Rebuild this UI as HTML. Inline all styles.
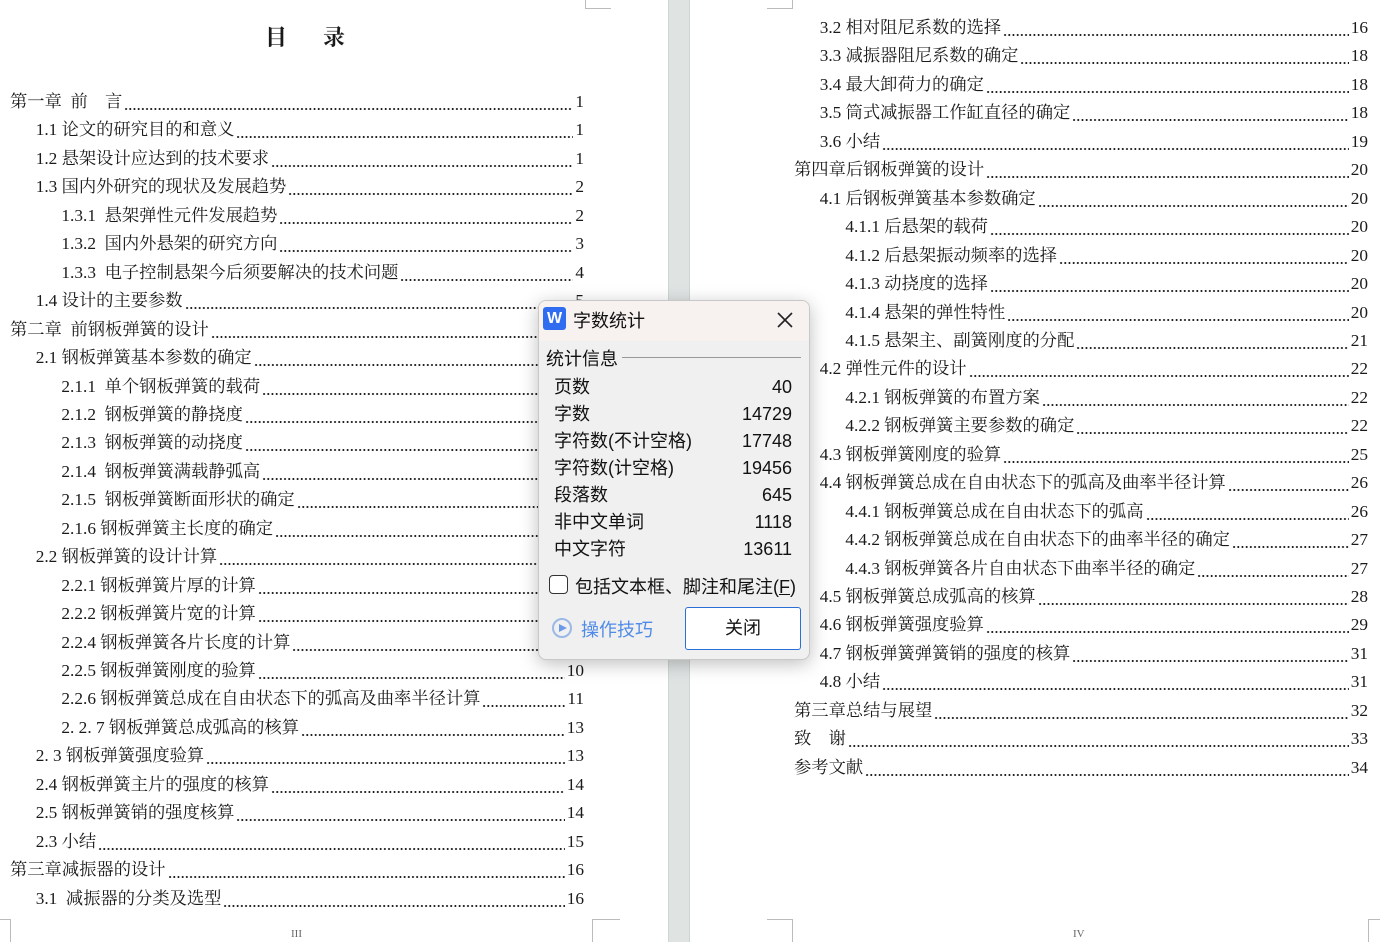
<!DOCTYPE html>
<html><head><meta charset="utf-8"><style>
*{margin:0;padding:0;box-sizing:border-box}
body{width:1380px;height:942px;position:relative;background:#fff;overflow:hidden;font-family:"Liberation Serif","Noto Serif CJK SC",serif;color:#1a1a1a}
.gap{position:absolute;left:668px;top:0;width:22px;height:942px;background:#dfe4e3;border-left:1px solid #cfd5d4;border-right:1px solid #cfd5d4}
.r{position:absolute;height:22px;display:flex;align-items:flex-end;font-size:17.3px;line-height:22px;white-space:nowrap}
.r .l{flex:1;height:22px;margin:0 2px;background-image:radial-gradient(circle,#222 0.9px,transparent 1.1px);background-size:4.2px 4px;background-repeat:repeat-x;background-position:0 16px}
.m{position:absolute;border-color:#bbb;border-style:solid;border-width:0}
.title{position:absolute;left:265px;top:21px;font-size:22px;font-weight:bold;letter-spacing:36px;font-family:"Noto Serif CJK SC",serif}
.pn{position:absolute;font-size:11px;color:#666}
.dlg{position:absolute;left:538px;top:300px;width:272px;height:360px;background:#f0f0f0;border:1px solid #c8c8c8;border-radius:8px;box-shadow:0 4px 18px rgba(0,0,0,.25);font-family:"Liberation Sans","Noto Sans CJK SC",sans-serif;color:#111;overflow:hidden}
.tb{height:40px;background:#f7f1ef;position:relative}
.dr{position:absolute;left:15px;right:17px;display:flex;justify-content:space-between;font-size:18px;line-height:24px}
</style></head><body>
<div class="gap"></div>
<div class="m" style="left:585px;top:0;width:26px;height:9px;border-left-width:1px;border-bottom-width:1px"></div>
<div class="m" style="left:767px;top:0;width:26px;height:9px;border-right-width:1px;border-bottom-width:1px"></div>
<div class="m" style="left:0;top:919px;width:11px;height:23px;border-right-width:1px;border-top-width:1px"></div>
<div class="m" style="left:592px;top:919px;width:28px;height:23px;border-left-width:1px;border-top-width:1px"></div>
<div class="m" style="left:767px;top:919px;width:26px;height:23px;border-right-width:1px;border-top-width:1px"></div>
<div class="m" style="left:1368px;top:919px;width:12px;height:23px;border-left-width:1px;border-top-width:1px"></div>
<div class="title">目录</div>
<div class="pn" style="left:291px;top:928px">III</div>
<div class="pn" style="left:1073px;top:928px">IV</div>
<div id="L"></div>
<div class="dlg">
 <div class="tb">
  <div style="position:absolute;left:4px;top:6px;width:23px;height:23px;background:#2f6cf0;border-radius:3px;color:#fff;font-weight:bold;font-size:16px;text-align:center;line-height:23px">W</div>
  <div style="position:absolute;left:34px;top:6px;font-size:18px">字数统计</div>
  <svg style="position:absolute;left:237px;top:10px" width="18" height="18"><path d="M2 2L16 16M16 2L2 16" stroke="#222" stroke-width="1.6"/></svg>
 </div>
 <div style="position:absolute;left:7px;top:44px;font-size:18px">统计信息</div>
 <div style="position:absolute;left:83px;right:8px;top:56px;border-top:1px solid #999"></div>
 <div class="dr" style="top:74px"><span>页数</span><span>40</span></div>
 <div class="dr" style="top:101px"><span>字数</span><span>14729</span></div>
 <div class="dr" style="top:128px"><span>字符数(不计空格)</span><span>17748</span></div>
 <div class="dr" style="top:155px"><span>字符数(计空格)</span><span>19456</span></div>
 <div class="dr" style="top:182px"><span>段落数</span><span>645</span></div>
 <div class="dr" style="top:209px"><span>非中文单词</span><span>1118</span></div>
 <div class="dr" style="top:236px"><span>中文字符</span><span>13611</span></div>
 <div style="position:absolute;left:10px;top:274px;width:19px;height:19px;border:1px solid #333;border-radius:4px;background:#fff"></div>
 <div style="position:absolute;left:36px;top:272px;font-size:18px">包括文本框、脚注和尾注(<u>F</u>)</div>
 <div style="position:absolute;left:13px;top:317px;width:20px;height:20px;border:2px solid #9bb8e6;border-radius:50%"></div>
 <svg style="position:absolute;left:19px;top:322px" width="10" height="10"><path d="M1 1L9 5L1 9Z" fill="#6b9be8"/></svg>
 <div style="position:absolute;left:42px;top:315px;font-size:18px;color:#4f8ae8">操作技巧</div>
 <div style="position:absolute;left:146px;top:306px;width:116px;height:43px;border:1px solid #2a6fd6;border-radius:3px;background:#fff;text-align:center;line-height:41px;font-size:18px">关闭</div>
</div>
<script>
const L=[[0,"第一章  前    言","1"],[1,"1.1 论文的研究目的和意义","1"],[1,"1.2 悬架设计应达到的技术要求","1"],[1,"1.3 国内外研究的现状及发展趋势","2"],[2,"1.3.1  悬架弹性元件发展趋势","2"],[2,"1.3.2  国内外悬架的研究方向","3"],[2,"1.3.3  电子控制悬架今后须要解决的技术问题","4"],[1,"1.4 设计的主要参数","5"],[0,"第二章  前钢板弹簧的设计","5"],[1,"2.1 钢板弹簧基本参数的确定","5"],[2,"2.1.1  单个钢板弹簧的载荷","5"],[2,"2.1.2  钢板弹簧的静挠度","6"],[2,"2.1.3  钢板弹簧的动挠度","6"],[2,"2.1.4  钢板弹簧满载静弧高","6"],[2,"2.1.5  钢板弹簧断面形状的确定","7"],[2,"2.1.6 钢板弹簧主长度的确定","7"],[1,"2.2 钢板弹簧的设计计算","8"],[2,"2.2.1 钢板弹簧片厚的计算","8"],[2,"2.2.2 钢板弹簧片宽的计算","8"],[2,"2.2.4 钢板弹簧各片长度的计算","9"],[2,"2.2.5 钢板弹簧刚度的验算","10"],[2,"2.2.6 钢板弹簧总成在自由状态下的弧高及曲率半径计算","11"],[2,"2. 2. 7 钢板弹簧总成弧高的核算","13"],[1,"2. 3 钢板弹簧强度验算","13"],[1,"2.4 钢板弹簧主片的强度的核算","14"],[1,"2.5 钢板弹簧销的强度核算","14"],[1,"2.3 小结","15"],[0,"第三章减振器的设计","16"],[1,"3.1  减振器的分类及选型","16"]];
const R=[[1,"3.2 相对阻尼系数的选择","16"],[1,"3.3 减振器阻尼系数的确定","18"],[1,"3.4 最大卸荷力的确定","18"],[1,"3.5 筒式减振器工作缸直径的确定","18"],[1,"3.6 小结","19"],[0,"第四章后钢板弹簧的设计","20"],[1,"4.1 后钢板弹簧基本参数确定","20"],[2,"4.1.1 后悬架的载荷","20"],[2,"4.1.2 后悬架振动频率的选择","20"],[2,"4.1.3 动挠度的选择","20"],[2,"4.1.4 悬架的弹性特性","20"],[2,"4.1.5 悬架主、副簧刚度的分配","21"],[1,"4.2 弹性元件的设计","22"],[2,"4.2.1 钢板弹簧的布置方案","22"],[2,"4.2.2 钢板弹簧主要参数的确定","22"],[1,"4.3 钢板弹簧刚度的验算","25"],[1,"4.4 钢板弹簧总成在自由状态下的弧高及曲率半径计算","26"],[2,"4.4.1 钢板弹簧总成在自由状态下的弧高","26"],[2,"4.4.2 钢板弹簧总成在自由状态下的曲率半径的确定","27"],[2,"4.4.3 钢板弹簧各片自由状态下曲率半径的确定","27"],[1,"4.5 钢板弹簧总成弧高的核算","28"],[1,"4.6 钢板弹簧强度验算","29"],[1,"4.7 钢板弹簧弹簧销的强度的核算","31"],[1,"4.8 小结","31"],[0,"第三章总结与展望","32"],[0,"致    谢","33"],[0,"参考文献","34"]];
let h="";
function add(arr,x0,right,y0){arr.forEach((e,i)=>{const x=x0+e[0]*25.7;const y=y0+i*28.45-11;h+=`<div class="r" style="left:${x}px;width:${right-x}px;top:${y}px"><span>${e[1].replace(/ /g,"&nbsp;")}</span><span class="l"></span><span>${e[2]}</span></div>`;});}
add(L,10,584,102);add(R,794,1368,28);
document.getElementById("L").innerHTML=h;
</script>
</body></html>
